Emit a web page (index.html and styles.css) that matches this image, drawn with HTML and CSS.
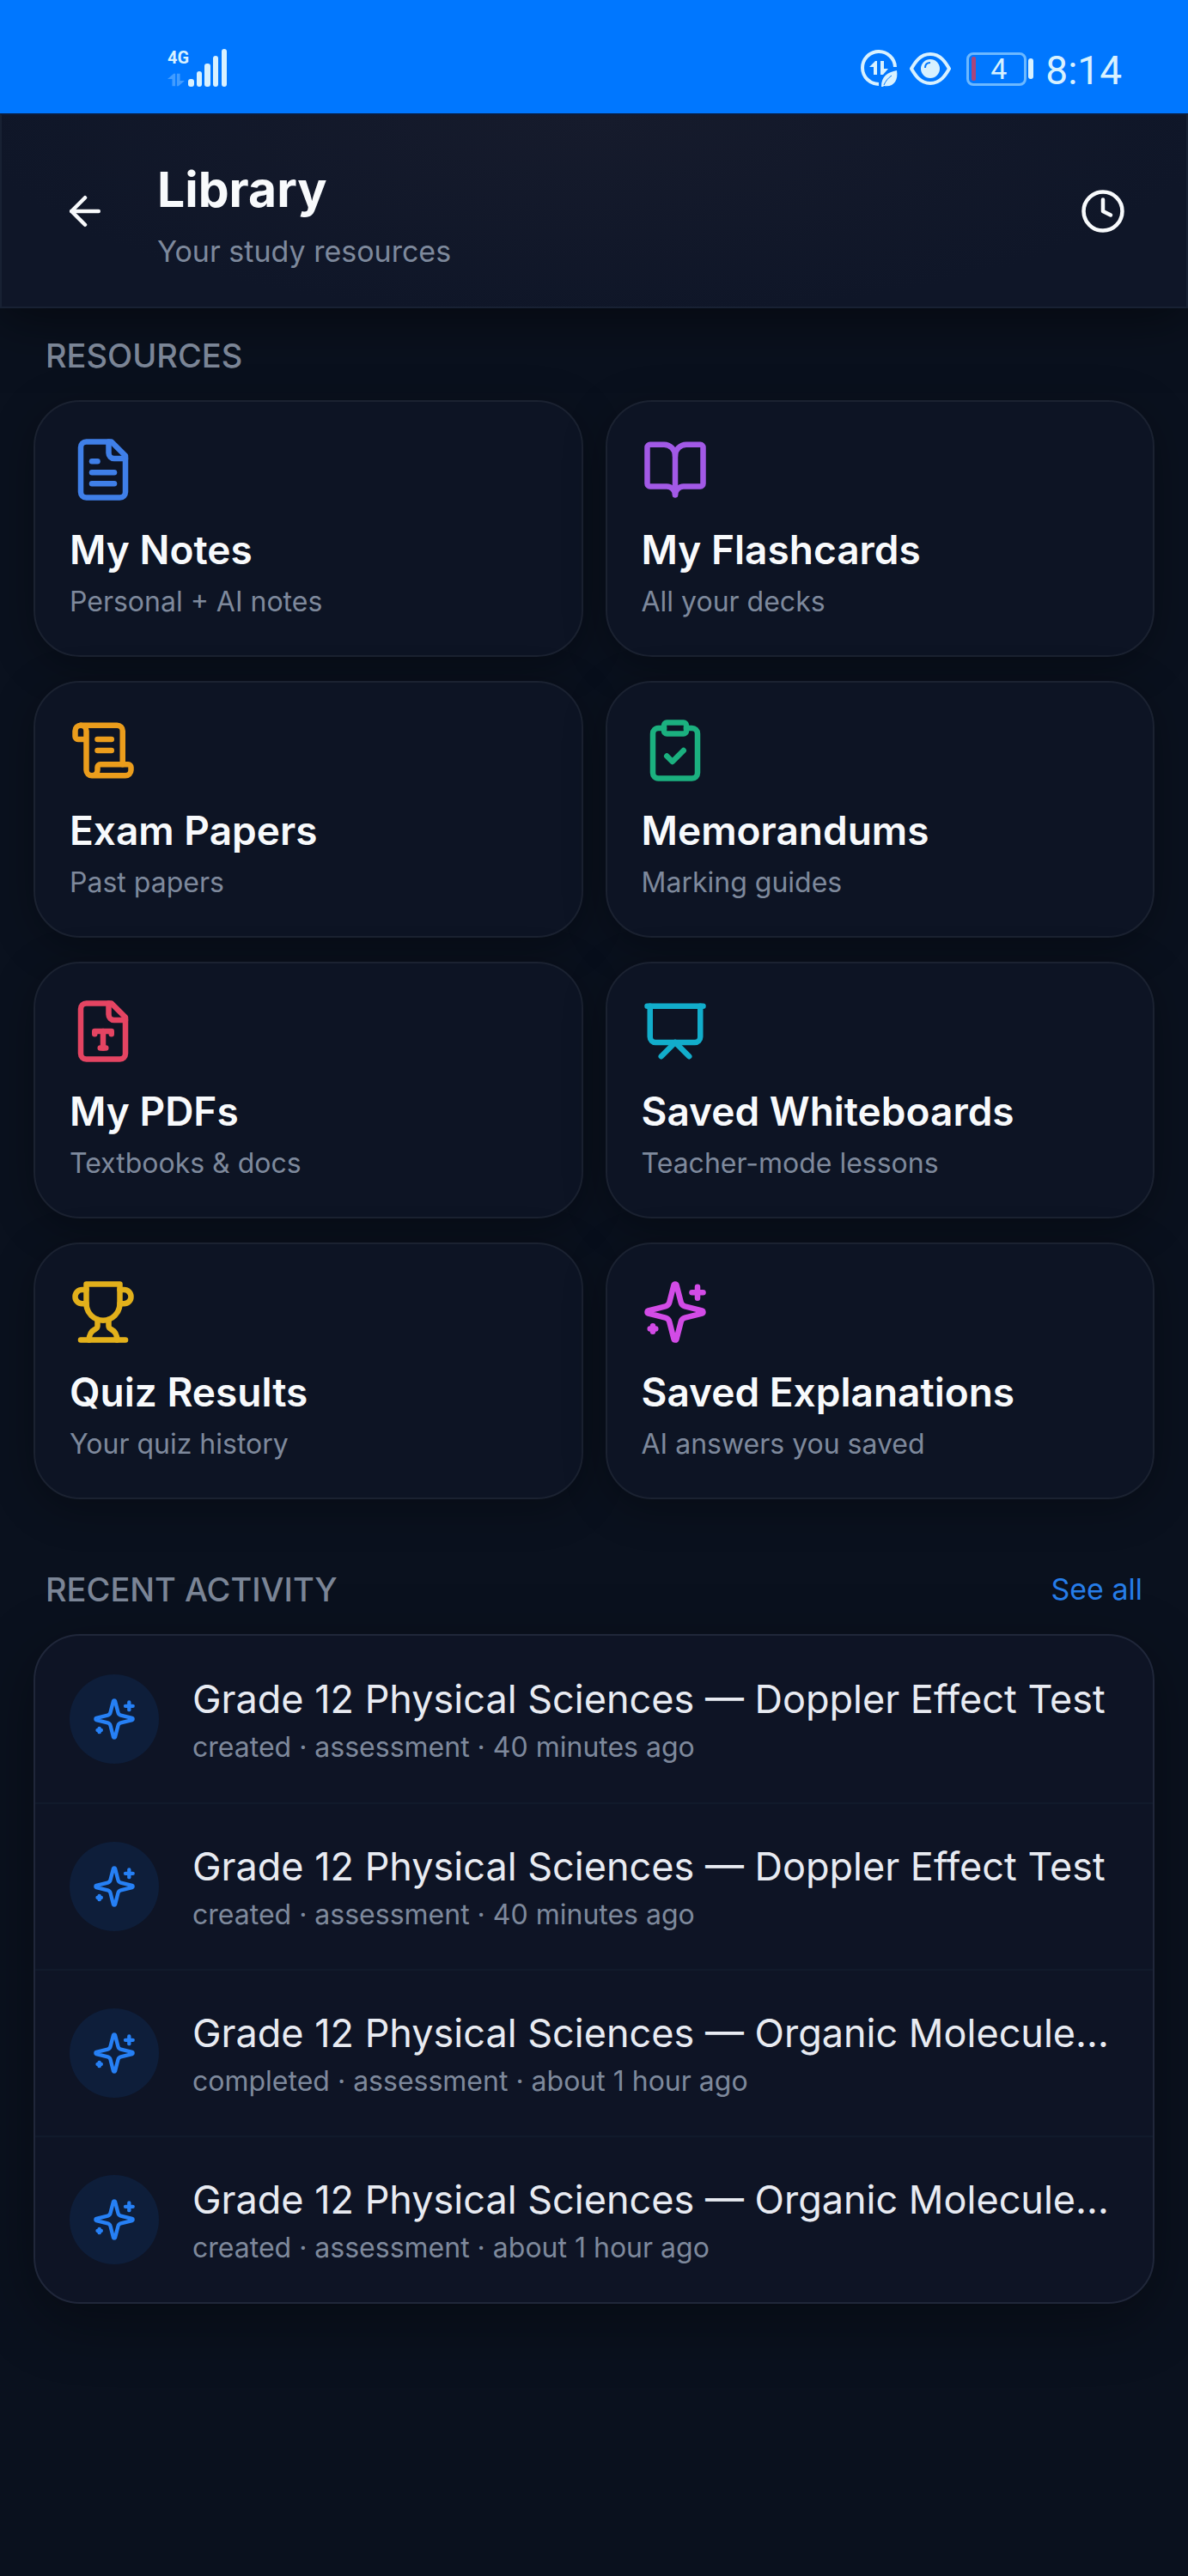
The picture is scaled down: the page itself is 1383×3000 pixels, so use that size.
FILE: index.html
```html
<!DOCTYPE html>
<html lang="en">
<head>
  <meta charset="UTF-8">
  <meta name="viewport" content="width=device-width, initial-scale=1">
  <title>Library</title>
  <link rel="stylesheet" href="styles.css">
</head>
<body>
  <!-- Icon set -->
  <svg class="icon-defs" aria-hidden="true">
    <symbol id="icon-back" viewBox="0 0 24 24"><path d="m12 19-7-7 7-7"/><path d="M19 12H5"/></symbol>
    <symbol id="icon-clock" viewBox="0 0 24 24"><circle cx="12" cy="12" r="10"/><path d="M12 6v6l4 2"/></symbol>
    <symbol id="icon-notes" viewBox="0 0 24 24"><path d="M15 2H6a2 2 0 0 0-2 2v16a2 2 0 0 0 2 2h12a2 2 0 0 0 2-2V7Z"/><path d="M14 2v4a2 2 0 0 0 2 2h4"/><path d="M10 9H8"/><path d="M16 13H8"/><path d="M16 17H8"/></symbol>
    <symbol id="icon-book" viewBox="0 0 24 24"><path d="M12 7v14"/><path d="M3 18a1 1 0 0 1-1-1V4a1 1 0 0 1 1-1h5a4 4 0 0 1 4 4 4 4 0 0 1 4-4h5a1 1 0 0 1 1 1v13a1 1 0 0 1-1 1h-6a3 3 0 0 0-3 3 3 3 0 0 0-3-3z"/></symbol>
    <symbol id="icon-scroll" viewBox="0 0 24 24"><path d="M15 12h-5"/><path d="M15 8h-5"/><path d="M19 17V5a2 2 0 0 0-2-2H4"/><path d="M8 21h12a2 2 0 0 0 2-2v-1a1 1 0 0 0-1-1H11a1 1 0 0 0-1 1v1a2 2 0 1 1-4 0V5a2 2 0 1 0-4 0v2a1 1 0 0 0 1 1h3"/></symbol>
    <symbol id="icon-clipboard" viewBox="0 0 24 24"><rect x="8" y="2" width="8" height="4" rx="1"/><path d="M16 4h2a2 2 0 0 1 2 2v14a2 2 0 0 1-2 2H6a2 2 0 0 1-2-2V6a2 2 0 0 1 2-2h2"/><path d="m9 14 2 2 4-4"/></symbol>
    <symbol id="icon-pdf" viewBox="0 0 24 24"><path d="M15 2H6a2 2 0 0 0-2 2v16a2 2 0 0 0 2 2h12a2 2 0 0 0 2-2V7Z"/><path d="M14 2v4a2 2 0 0 0 2 2h4"/><path d="M9 13v-1h6v1"/><path d="M12 12v6"/><path d="M11 18h2"/></symbol>
    <symbol id="icon-board" viewBox="0 0 24 24"><path d="M2 3h20"/><path d="M21 3v11a2 2 0 0 1-2 2H5a2 2 0 0 1-2-2V3"/><path d="m7 21 5-5 5 5"/></symbol>
    <symbol id="icon-trophy" viewBox="0 0 24 24"><path d="M6 9H4.500a2.500 2.500 0 0 1 0-5H6"/><path d="M18 9h1.500a2.500 2.500 0 0 0 0-5H18"/><path d="M4 22h16"/><path d="M10 14.660V17c0 .55-.47.98-.97 1.210C7.850 18.750 7 20.240 7 22"/><path d="M14 14.660V17c0 .55.47.98.97 1.210C16.150 18.750 17 20.240 17 22"/><path d="M18 2H6v7a6 6 0 0 0 12 0V2Z"/></symbol>
    <symbol id="icon-sparkles" viewBox="0 0 24 24"><path d="M9.937 15.500A2 2 0 0 0 8.500 14.063l-6.135-1.582a.5.5 0 0 1 0-.962L8.500 9.936A2 2 0 0 0 9.937 8.500l1.582-6.135a.5.5 0 0 1 .963 0L14.063 8.500A2 2 0 0 0 15.500 9.937l6.135 1.581a.5.5 0 0 1 0 .964L15.500 14.063a2 2 0 0 0-1.437 1.437l-1.582 6.135a.5.5 0 0 1-.963 0z"/><path d="M20 3v4"/><path d="M22 5h-4"/><path d="M4 17v2"/><path d="M5 18H3"/></symbol>
  </svg>

  <div class="status-bar">
    <div class="status-left">
      <div class="network">
        <span class="network-type">4G</span>
        <svg class="network-arrows" viewBox="0 0 22 16"><path d="M10 0v16H6V7H0L8 0zM12 0h4v9h6l-8 7h-2z"/></svg>
      </div>
      <svg class="signal" viewBox="0 0 46 44">
        <rect x="0" y="35" width="7" height="9" rx="3"/>
        <rect x="10" y="26" width="6" height="18" rx="3"/>
        <rect x="19" y="17" width="7" height="27" rx="3"/>
        <rect x="29" y="8" width="6" height="36" rx="3"/>
        <rect x="39" y="0" width="6" height="44" rx="3"/>
      </svg>
    </div>
    <div class="status-right">
      <svg class="data-saver" viewBox="0 0 44 44">
        <path d="M21 40A19 19 0 1 1 40 20" fill="none" stroke="currentColor" stroke-width="4"/>
        <path d="M19 13v16h-4V20h-5l7-7zM23 13h4v9h5l-6 7h-3z"/>
        <path d="M42 24c2 12-4 20-15 18l-1 1h-2c0-12 7-17 18-19z"/>
        <path d="M27 41c2-5 5-8 9-11" fill="none" stroke="#0077ff" stroke-width="1"/>
      </svg>
      <svg class="eye" viewBox="0 0 48 38">
        <path d="M2 19C6 12 12 2 24 2s18 10 22 17c-4 7-10 17-22 17S6 26 2 19z" fill="none" stroke="currentColor" stroke-width="4" stroke-linejoin="round"/>
        <circle cx="24" cy="19" r="11"/>
        <path d="M18 18c0-4 2-6 6-6" fill="none" stroke="#0077ff" stroke-width="2"/>
      </svg>
      <div class="battery"><span class="battery-level"></span><span class="battery-text">4</span></div>
      <span class="battery-cap"></span>
      <span class="time">8:14</span>
    </div>
  </div>

  <header class="header">
    <button class="icon-button" type="button" aria-label="Back"><svg class="icon"><use href="#icon-back"/></svg></button>
    <div class="header-text">
      <h1>Library</h1>
      <p>Your study resources</p>
    </div>
    <button class="icon-button" type="button" aria-label="History"><svg class="icon"><use href="#icon-clock"/></svg></button>
  </header>

  <main>
    <section>
      <div class="section-header">
        <h2>RESOURCES</h2>
      </div>
      <div class="grid">
        <a class="card" href="#"><svg class="icon blue"><use href="#icon-notes"/></svg><h3>My Notes</h3><p>Personal + AI notes</p></a>
        <a class="card" href="#"><svg class="icon purple"><use href="#icon-book"/></svg><h3>My Flashcards</h3><p>All your decks</p></a>
        <a class="card" href="#"><svg class="icon amber"><use href="#icon-scroll"/></svg><h3>Exam Papers</h3><p>Past papers</p></a>
        <a class="card" href="#"><svg class="icon green"><use href="#icon-clipboard"/></svg><h3>Memorandums</h3><p>Marking guides</p></a>
        <a class="card" href="#"><svg class="icon rose"><use href="#icon-pdf"/></svg><h3>My PDFs</h3><p>Textbooks &amp; docs</p></a>
        <a class="card" href="#"><svg class="icon cyan"><use href="#icon-board"/></svg><h3>Saved Whiteboards</h3><p>Teacher-mode lessons</p></a>
        <a class="card" href="#"><svg class="icon yellow"><use href="#icon-trophy"/></svg><h3>Quiz Results</h3><p>Your quiz history</p></a>
        <a class="card" href="#"><svg class="icon pink"><use href="#icon-sparkles"/></svg><h3>Saved Explanations</h3><p>AI answers you saved</p></a>
      </div>
    </section>

    <section class="recent">
      <div class="section-header">
        <h2>RECENT ACTIVITY</h2>
        <a href="#">See all</a>
      </div>
      <ul class="activity">
        <li>
          <span class="badge"><svg class="icon"><use href="#icon-sparkles"/></svg></span>
          <div class="activity-text">
            <h3>Grade 12 Physical Sciences — Doppler Effect Test</h3>
            <p>created · assessment · 40 minutes ago</p>
          </div>
        </li>
        <li>
          <span class="badge"><svg class="icon"><use href="#icon-sparkles"/></svg></span>
          <div class="activity-text">
            <h3>Grade 12 Physical Sciences — Doppler Effect Test</h3>
            <p>created · assessment · 40 minutes ago</p>
          </div>
        </li>
        <li>
          <span class="badge"><svg class="icon"><use href="#icon-sparkles"/></svg></span>
          <div class="activity-text">
            <h3>Grade 12 Physical Sciences — Organic Molecule…</h3>
            <p>completed · assessment · about 1 hour ago</p>
          </div>
        </li>
        <li>
          <span class="badge"><svg class="icon"><use href="#icon-sparkles"/></svg></span>
          <div class="activity-text">
            <h3>Grade 12 Physical Sciences — Organic Molecule…</h3>
            <p>created · assessment · about 1 hour ago</p>
          </div>
        </li>
      </ul>
    </section>
  </main>
</body>
</html>
```
FILE: styles.css
```css
* {
  box-sizing: border-box;
}

body {
  margin: 0;
  min-height: 100vh;
  background-color: #0a111e;
  color: #f8fafc;
  font-family: Inter, "Liberation Sans", sans-serif;
}

h1,
h2,
h3,
p,
ul {
  margin: 0;
  padding: 0;
}

a {
  color: inherit;
  text-decoration: none;
}

.icon-defs {
  display: none;
}

.icon {
  display: block;
  width: 54px;
  height: 54px;
  fill: none;
  stroke: currentColor;
  stroke-width: 2;
  stroke-linecap: round;
  stroke-linejoin: round;
}

/* Status bar, kept above the header shadow */
.status-bar {
  position: relative;
  z-index: 1;
  display: flex;
  justify-content: space-between;
  height: 132px;
  padding: 57px 77px 0 195px;
  background-color: #0077ff;
  color: #d8f1ff;
  font-family: Roboto, sans-serif;
}

.status-bar svg {
  display: block;
  fill: currentColor;
}

.status-left {
  display: flex;
}

.network {
  width: 24px;
}

.network-type {
  display: block;
  font-size: 20px;
  font-weight: 700;
  line-height: 20px;
}

.network-arrows {
  width: 20px;
  height: 16px;
  margin-top: 8px;
  opacity: 0.3;
}

.signal {
  width: 46px;
  height: 44px;
}

.status-right {
  display: flex;
  align-items: center;
  height: 46px;
}

.data-saver {
  width: 44px;
  height: 44px;
}

.eye {
  width: 48px;
  height: 38px;
  margin: 0 18px 0 13px;
}

.battery {
  display: flex;
  align-items: center;
  width: 70px;
  height: 39px;
  padding: 0 3px;
  border: 3px solid #6cb8ff;
  border-radius: 8px;
}

.battery-level {
  width: 5px;
  height: 28px;
  border-radius: 2px;
  background-color: #a8467c;
}

.battery-text {
  flex: 1;
  font-size: 34px;
  line-height: 34px;
  text-align: center;
}

.battery-cap {
  width: 6px;
  height: 24px;
  margin: 0 14px 0 2px;
  border-radius: 3px;
  background-color: #d8f1ff;
}

.time {
  padding-top: 4px;
  font-size: 46px;
  line-height: 46px;
}

/* Header */
.header {
  display: flex;
  align-items: center;
  gap: 31px;
  min-height: 227px;
  padding: 0 44px;
  border: 2px solid #182133;
  border-top-color: #0b1c3c;
  background: radial-gradient(ellipse at 50% 0%, #161b2c 0%, #0f1628 75%);
  box-shadow: 0 10px 60px rgba(0, 0, 0, 0.5);
}

.icon-button {
  display: flex;
  align-items: center;
  justify-content: center;
  width: 106px;
  height: 106px;
  padding: 0;
  border: none;
  background: none;
  color: inherit;
  cursor: pointer;
}

.header-text {
  flex: 1;
  padding-top: 14px;
}

h1 {
  font-size: 57px;
  font-weight: 700;
  line-height: 64px;
}

.header-text p {
  margin-top: 16px;
  color: #7e899c;
  font-size: 34px;
  line-height: 48px;
}

main {
  padding: 29px 39px 80px;
}

.section-header {
  display: flex;
  justify-content: space-between;
  margin-bottom: 26px;
  padding: 0 14px;
}

h2 {
  color: #7b8596;
  font-size: 38px;
  font-weight: 500;
  line-height: 52px;
}

.section-header a {
  color: #267de9;
  font-size: 34px;
  line-height: 52px;
}

/* Resource cards */
.grid {
  display: grid;
  grid-template-columns: 1fr 1fr;
  gap: 28px 26px;
}

.card {
  padding: 40px;
  border: 2px solid #1b2231;
  border-radius: 54px;
  background-color: #0d1424;
  box-shadow: 0 10px 50px rgba(0, 0, 0, 0.3);
}

.card .icon {
  width: 78px;
  height: 78px;
}

.card h3 {
  margin-top: 26px;
  font-size: 46px;
  font-weight: 600;
  line-height: 56px;
}

.card p {
  margin-top: 11px;
  color: #7e899c;
  font-size: 32px;
  line-height: 44px;
}

.blue { color: #3f7fe8; }
.purple { color: #a259e6; }
.amber { color: #eb9d1c; }
.green { color: #1bb07f; }
.rose { color: #e44462; }
.cyan { color: #12adcb; }
.yellow { color: #e2b01b; }
.pink { color: #d24be6; }

/* Recent activity */
.recent {
  margin-top: 79px;
}

.activity {
  list-style: none;
  border: 2px solid #20273a;
  border-radius: 54px;
  background-color: #0e1425;
  box-shadow: 0 20px 70px rgba(0, 0, 0, 0.35);
}

.activity li {
  display: flex;
  align-items: center;
  gap: 39px;
  min-height: 194px;
  padding: 0 40px;
}

.activity li + li {
  border-top: 2px solid #111a2b;
}

.badge {
  display: flex;
  flex-shrink: 0;
  align-items: center;
  justify-content: center;
  width: 104px;
  height: 104px;
  border-radius: 50%;
  background-color: #0e1e3a;
  color: #2680f5;
}

.badge .icon {
  width: 52px;
  height: 52px;
}

.activity-text {
  min-width: 0;
  padding-top: 4px;
}

.activity h3 {
  overflow: hidden;
  color: #e8ebf2;
  font-size: 45px;
  font-weight: 400;
  line-height: 56px;
  text-overflow: ellipsis;
  white-space: nowrap;
}

.activity p {
  margin-top: 6px;
  color: #7e899c;
  font-size: 32px;
  line-height: 44px;
}
```
